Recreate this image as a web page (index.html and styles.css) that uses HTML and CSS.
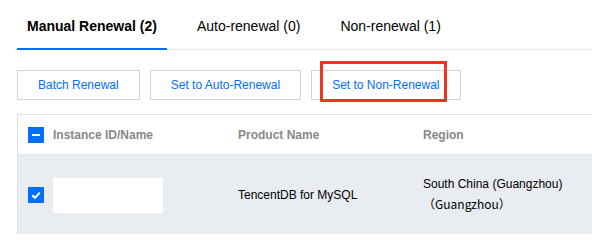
FILE: index.html
```html
<!DOCTYPE html>
<html lang="en">

<head>
    <meta charset="UTF-8">
    <meta name="viewport" content="width=device-width, initial-scale=1.0">
    <title>Renewal Management</title>
    <link rel="stylesheet" href="styles.css">
</head>

<body>

    <div class="page">
        <div class="tabs">
            <div class="tab active">Manual Renewal (2)</div>
            <div class="tab">Auto-renewal (0)</div>
            <div class="tab">Non-renewal (1)</div>
        </div>

        <div class="toolbar">
            <button class="btn">Batch Renewal</button>
            <button class="btn">Set to Auto-Renewal</button>
            <button class="btn marked">Set to Non-Renewal<span class="mark"></span></button>
        </div>

        <table class="list">
            <thead>
                <tr>
                    <th class="col-check"><span class="checkbox">
                        <svg width="16" height="16" viewBox="0 0 16 16"><rect x="4" y="7" width="8" height="2" fill="#fff"/></svg>
                    </span></th>
                    <th class="col-id">Instance ID/Name</th>
                    <th class="col-product">Product Name</th>
                    <th>Region</th>
                </tr>
            </thead>
            <tbody>
                <tr class="selected">
                    <td class="col-check"><span class="checkbox">
                        <svg width="16" height="16" viewBox="0 0 16 16"><path d="M4.2 8.2 L7 10.8 L11.8 5.6" fill="none" stroke="#fff" stroke-width="2"/></svg>
                    </span></td>
                    <td class="col-id"><div class="masked"></div></td>
                    <td class="col-product">TencentDB for MySQL</td>
                    <td class="col-region">South China (Guangzhou)<br><span class="cjk">（Guangzhou）</span></td>
                </tr>
            </tbody>
        </table>
    </div>

</body>

</html>
```

FILE: styles.css
```css
body {
    margin: 0;
    padding: 0;
    font-family: 'Liberation Sans', Arial, sans-serif;
    background: #ffffff;
    color: #000000;
    overflow: hidden;
}

.page {
    padding-left: 17px;
}

.tabs {
    display: flex;
    gap: 20px;
    height: 50px;
    box-shadow: inset 0 -1px 0 #e7e7e7;
}

.tab {
    padding: 15px 10px 11px;
    line-height: 22px;
    font-size: 14px;
    color: #000;
    border-bottom: 2px solid transparent;
}

.tab.active {
    font-weight: bold;
    border-bottom-color: #006eff;
}

.toolbar {
    display: flex;
    gap: 10px;
    margin-top: 20px;
}

.btn {
    height: 30px;
    padding: 0 20px;
    border: 1px solid #cfd5de;
    background: #fff;
    color: #006eff;
    font-family: inherit;
    font-size: 12px;
}

.btn.marked {
    position: relative;
}

.mark {
    position: absolute;
    left: 8px;
    top: -10px;
    width: 121px;
    height: 35px;
    border: 3px solid #f2331f;
}

.list {
    margin-top: 14px;
    width: 575px;
    border-collapse: collapse;
    border-top: 1px solid #dde2ea;
    border-left: 1px solid #dde2ea;
    font-size: 12px;
}

.list th {
    height: 39px;
    padding: 0;
    text-align: left;
    font-weight: bold;
    color: #888;
    border-bottom: 1px solid #dde2ea;
}

.list td {
    height: 78px;
    padding: 0;
}

.list tr.selected {
    background: #e9ecf1;
}

.col-check {
    width: 25px;
    padding-left: 10px !important;
}

.col-id {
    width: 185px;
}

.col-product {
    width: 185px;
}

.col-region {
    line-height: 20px;
    padding-bottom: 1px !important;
}

.checkbox {
    display: block;
    width: 16px;
    height: 16px;
    background: #006eff;
}

.checkbox svg {
    display: block;
}

.masked {
    width: 110px;
    height: 35px;
    background: #fff;
    margin-top: 1px;
}

.cjk {
    font-family: 'Noto Sans CJK SC', 'Liberation Sans', sans-serif;
}
```
